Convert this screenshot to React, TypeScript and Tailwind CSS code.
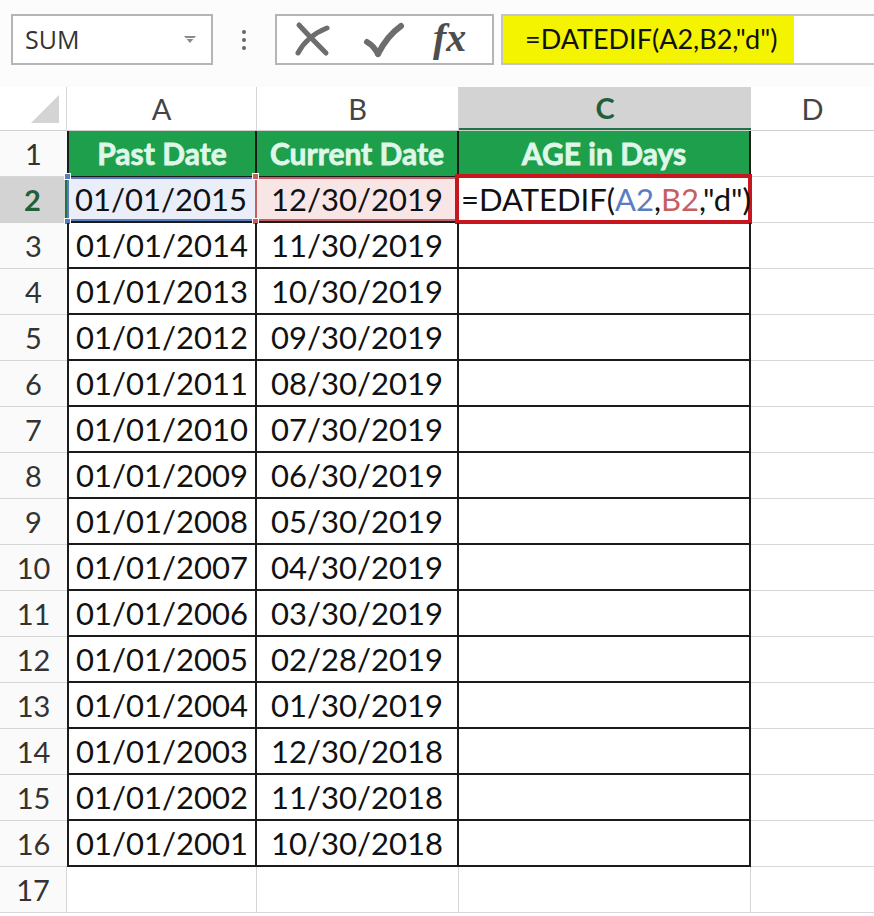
import React from 'react';

const rows = [
  ['01/01/2015', '12/30/2019'],
  ['01/01/2014', '11/30/2019'],
  ['01/01/2013', '10/30/2019'],
  ['01/01/2012', '09/30/2019'],
  ['01/01/2011', '08/30/2019'],
  ['01/01/2010', '07/30/2019'],
  ['01/01/2009', '06/30/2019'],
  ['01/01/2008', '05/30/2019'],
  ['01/01/2007', '04/30/2019'],
  ['01/01/2006', '03/30/2019'],
  ['01/01/2005', '02/28/2019'],
  ['01/01/2004', '01/30/2019'],
  ['01/01/2003', '12/30/2018'],
  ['01/01/2002', '11/30/2018'],
  ['01/01/2001', '10/30/2018'],
];

const cellText = "font-[Lato,sans-serif] text-[31px] text-[#111]";
const headText = "text-[30px] font-bold text-[#dff7e8] [-webkit-text-stroke:0.8px_#dff7e8] whitespace-nowrap";

const Corner = ({ color, pos }: { color: string; pos: string }) => (
  <span className={`absolute w-[7px] h-[7px] border border-white ${color} ${pos}`} />
);

export default function App() {
  return (
    <div className="w-[874px] h-[916px] bg-white overflow-hidden font-[Lato,sans-serif]">
      {/* formula bar */}
      <div className="h-[87px] flex items-start pt-[14px] bg-[#fcfcfc]">
        <div className="ml-[11px] w-[202px] h-[51px] border-2 border-[#b5b5b5] bg-white flex items-center justify-between pl-[12px] pr-[14px]">
          <span className="font-['Open_Sans',sans-serif] text-[25px] text-[#333]">SUM</span>
          <svg width="14" height="9" viewBox="0 0 14 9">
            <path d="M1 1 H13 L7 8 Z" fill="#8a8a8a" />
            <path d="M3 3.5 H11" stroke="#fff" strokeWidth="1" />
          </svg>
        </div>
        <div className="w-[62px] h-[51px] flex flex-col items-center justify-center gap-[4px]">
          <span className="w-[4px] h-[4px] rounded-full bg-[#666]" />
          <span className="w-[4px] h-[4px] rounded-full bg-[#666]" />
          <span className="w-[4px] h-[4px] rounded-full bg-[#666]" />
        </div>
        <div className="w-[219px] h-[51px] border-2 border-[#b5b5b5] bg-white flex items-center">
          <svg width="40" height="40" viewBox="0 0 40 40" className="ml-[16px]">
            <path d="M6 5 Q18 18 33 33" stroke="#6d6d6d" strokeWidth="5" fill="none" strokeLinecap="round" />
            <path d="M5 33 Q14 16 34 8" stroke="#6d6d6d" strokeWidth="5" fill="none" strokeLinecap="round" />
          </svg>
          <svg width="42" height="40" viewBox="0 0 42 40" className="ml-[30px]">
            <path d="M4 22 Q11 26 15 34" stroke="#6d6d6d" strokeWidth="6" fill="none" strokeLinecap="round" />
            <path d="M15 34 Q24 16 38 6" stroke="#6d6d6d" strokeWidth="6" fill="none" strokeLinecap="round" />
          </svg>
          <span className="ml-[28px] font-['Liberation_Serif',serif] italic font-semibold text-[40px] leading-none text-[#4d4d4d] -mt-[4px]">fx</span>
        </div>
        <div className="ml-[7px] flex-1 h-[51px] border-y-2 border-l-2 border-[#c4c4c4] bg-white flex">
          <div className="w-[291px] h-full bg-[#f4f400] flex items-center pl-[22px]">
            <span className="text-[27px] text-[#111]">=DATEDIF(A2,B2,"d")</span>
          </div>
        </div>
      </div>

      {/* column headers */}
      <div className="h-[44px] flex border-b border-[#d0d0d0]">
        <div className="w-[67px] border-r border-[#d6d6d6] relative flex items-end justify-end pr-[7px] pb-[7px]">
          <div className="w-0 h-0 border-l-[28px] border-l-transparent border-b-[28px] border-b-[#d4d4d4]" />
        </div>
        <div className="w-[190px] border-r border-[#d6d6d6] flex items-center justify-center text-[29px] text-[#444]">A</div>
        <div className="w-[202px] border-r border-[#d6d6d6] flex items-center justify-center text-[29px] text-[#444]">B</div>
        <div className="w-[292px] bg-[#d3d3d3] border-b-2 border-[#217346] flex items-center justify-center text-[29px] font-bold text-[#1f5f3a]">C</div>
        <div className="flex-1 flex items-center justify-center text-[29px] text-[#444]">D</div>
      </div>

      {/* row 1: header */}
      <div className="h-[46px] flex">
        <div className="w-[67px] bg-[#fafafa] border-b border-[#d6d6d6] flex items-center justify-center text-[29px] text-[#333]">1</div>
        <div className={`w-[190px] bg-[#1e9f4b] border-l-2 border-r-2 border-b border-[#1b1b1b] flex items-center justify-center ${headText}`}>Past Date</div>
        <div className={`w-[202px] bg-[#1e9f4b] border-r-2 border-b border-[#1b1b1b] flex items-center justify-center ${headText}`}>Current Date</div>
        <div className={`w-[292px] bg-[#1e9f4b] border-r-2 border-b border-[#1b1b1b] flex items-center justify-center ${headText}`}>AGE in Days</div>
        <div className="flex-1 border-b border-[#d6d6d6]" />
      </div>

      {rows.map(([past, current], i) => {
        const n = i + 2;
        const first = n === 2;
        return (
          <div key={n} className="h-[46px] flex">
            <div className={`w-[67px] border-b flex items-center justify-center text-[29px] ${first ? 'bg-[#d3d3d3] border-[#d0d0d0] border-r-2 border-r-[#217346] font-bold text-[#1f5f3a]' : 'bg-[#fafafa] border-[#d6d6d6] text-[#333]'}`}>{n}</div>
            <div className={`w-[190px] border-r-2 border-b-2 border-[#1b1b1b] relative flex items-center justify-center ${first ? 'bg-[#e9eef8]' : 'border-l-2'} ${cellText}`}>
              {first && (
                <>
                  <span className="absolute inset-y-0 left-0 right-0 border-t-2 border-b-2 border-l-2 border-[#5a7dc2]" />
                  <Corner color="bg-[#5a7dc2]" pos="-top-[4px] -left-[3px]" />
                  <Corner color="bg-[#5a7dc2]" pos="-bottom-[4px] -left-[3px]" />
                </>
              )}
              <span className="relative">{past}</span>
            </div>
            <div className={`w-[202px] border-r-2 border-b-2 border-[#1b1b1b] relative flex items-center justify-center ${first ? 'bg-[#f8e6e6]' : ''} ${cellText}`}>
              {first && (
                <>
                  <span className="absolute -left-[2px] inset-y-0 right-0 border-2 border-[#c65f5f]" />
                  <Corner color="bg-[#c65f5f]" pos="-top-[4px] -left-[5px]" />
                  <Corner color="bg-[#c65f5f]" pos="-bottom-[4px] -left-[5px]" />
                </>
              )}
              <span className="relative">{current}</span>
            </div>
            <div className={`w-[292px] border-r-2 border-b-2 border-[#1b1b1b] relative flex items-center ${cellText}`}>
              {first && (
                <>
                  <span className="absolute -top-[3px] -bottom-[3px] -left-[4px] -right-[3px] border-4 border-[#c8161e]" />
                  <span className="relative pl-[2px] whitespace-nowrap">
                    =DATEDIF(<span className="text-[#5a7dc2]">A2</span>,<span className="text-[#c65f5f]">B2</span>,"d")
                  </span>
                </>
              )}
            </div>
            <div className="flex-1 border-b border-[#d6d6d6]" />
          </div>
        );
      })}

      {/* row 17 */}
      <div className="h-[46px] flex">
        <div className="w-[67px] bg-[#fafafa] border-r border-b border-[#d6d6d6] flex items-center justify-center text-[29px] text-[#333]">17</div>
        <div className="w-[190px] border-r border-b border-[#d6d6d6]" />
        <div className="w-[202px] border-r border-b border-[#d6d6d6]" />
        <div className="w-[292px] border-r border-b border-[#d6d6d6]" />
        <div className="flex-1 border-b border-[#d6d6d6]" />
      </div>
    </div>
  );
}
